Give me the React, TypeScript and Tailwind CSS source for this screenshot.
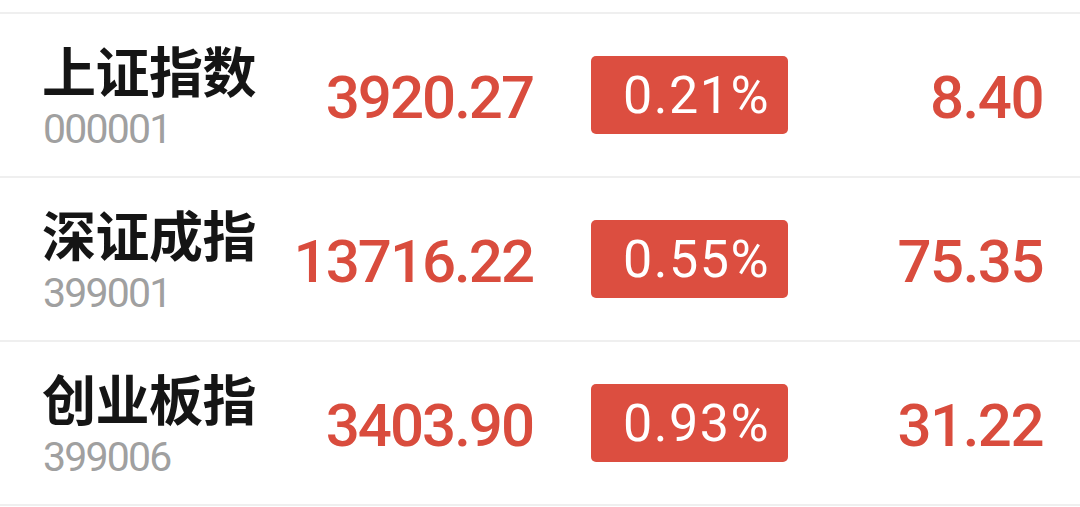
import React from "react";

const rows = [
  { name: "上证指数", code: "000001", price: "3920.27", pct: "0.21%", chg: "8.40" },
  { name: "深证成指", code: "399001", price: "13716.22", pct: "0.55%", chg: "75.35" },
  { name: "创业板指", code: "399006", price: "3403.90", pct: "0.93%", chg: "31.22" },
];

const num = { fontFamily: "Roboto, 'Liberation Sans', sans-serif" };
const cjk = { fontFamily: "'Noto Sans CJK SC', 'Noto Sans', sans-serif" };

export default function App() {
  return (
    <div className="w-[1080px] h-[507px] bg-white overflow-hidden pt-[12px]">
      <div className="border-t-2 border-[#efefef]">
        {rows.map((r) => (
          <div key={r.code} className="flex items-center h-[164px] border-b-2 border-[#efefef]">
            <div className="w-[260px] pl-[42px] flex flex-col pt-[3px]">
              <div className="text-[54px] leading-none font-bold text-[#151515] tracking-[-0.5px]" style={cjk}>
                {r.name}
              </div>
              <div
                className="mt-[12px] pl-[1px] text-[41px] leading-none text-[#a0a0a0] tracking-[-1.8px]"
                style={num}
              >
                {r.code}
              </div>
            </div>
            <div
              className="w-[273px] text-right text-[60px] leading-none font-medium text-[#d94c3d] tracking-[-2px] pt-[6px]"
              style={num}
            >
              {r.price}
            </div>
            <div className="ml-[58px] w-[197px] h-[78px] rounded-[5px] bg-[#dc4e40] flex items-center pl-[32px]">
              <span className="text-[52px] leading-none text-white tracking-[1.5px] pt-[2px]" style={num}>
                {r.pct}
              </span>
            </div>
            <div
              className="flex-1 text-right pr-[37px] text-[60px] leading-none font-medium text-[#d94c3d] tracking-[-1.5px] pt-[6px]"
              style={num}
            >
              {r.chg}
            </div>
          </div>
        ))}
      </div>
    </div>
  );
}
